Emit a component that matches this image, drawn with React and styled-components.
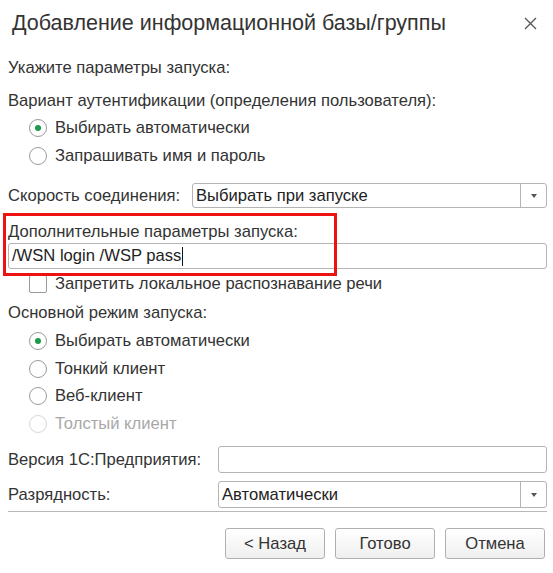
import React from "react";
import styled, { createGlobalStyle } from "styled-components";

const Global = createGlobalStyle`
  html, body { margin: 0; padding: 0; background: #fff; }
  body { font-family: "Liberation Sans", Arial, sans-serif; color: #333; }
`;

const FS = 16.6;

const Dialog = styled.div`
  width: 553px;
  height: 573px;
  background: #fff;
  display: flex;
  flex-direction: column;
  box-sizing: border-box;
  overflow: hidden;
`;

const Header = styled.div`
  height: 46px;
  display: flex;
  align-items: center;
  justify-content: space-between;
  padding: 0 16px 0 12px;
  flex-shrink: 0;
`;

const Title = styled.div`
  font-size: 21.5px;
  color: #333;
  white-space: nowrap;
`;

const Close = styled.div`
  width: 14px;
  height: 14px;
  display: flex;
  align-items: center;
  justify-content: center;
`;

const Body = styled.div`
  display: flex;
  flex-direction: column;
  padding: 0 6px 0 8px;
`;

const Text = styled.div`
  height: ${(p) => p.$h || 20}px;
  margin-top: ${(p) => p.$mt || 0}px;
  display: flex;
  align-items: center;
  font-size: ${FS}px;
  white-space: nowrap;
  color: #333;
`;

const Options = styled.div`
  display: flex;
  flex-direction: column;
  padding-left: 21px;
  margin-top: ${(p) => p.$mt || 0}px;
`;

const Option = styled.label`
  height: ${(p) => p.$h || 28}px;
  display: flex;
  align-items: center;
  gap: 8px;
  font-size: ${FS}px;
  color: ${(p) => (p.$disabled ? "#a8a8a8" : "#333")};
  white-space: nowrap;
`;

const Radio = styled.span`
  width: 18px;
  height: 18px;
  box-sizing: border-box;
  border-radius: 50%;
  border: 1px solid ${(p) => (p.$disabled ? "#d8d8d8" : "#9a9a9a")};
  background: #fff;
  display: flex;
  align-items: center;
  justify-content: center;
  flex-shrink: 0;
  &::after {
    content: "";
    display: ${(p) => (p.$checked ? "block" : "none")};
    width: 6px;
    height: 6px;
    border-radius: 50%;
    background: #1c9a48;
  }
`;

const Check = styled.span`
  width: 18px;
  height: 18px;
  box-sizing: border-box;
  border: 1px solid #9a9a9a;
  border-radius: 2px;
  background: #fff;
  flex-shrink: 0;
`;

const FieldRow = styled.div`
  height: ${(p) => p.$h || 27}px;
  margin-top: ${(p) => p.$mt || 0}px;
  display: grid;
  grid-template-columns: ${(p) => p.$label}px 1fr;
  align-items: center;
  font-size: ${FS}px;
  white-space: nowrap;
`;

const Box = styled.div`
  height: ${(p) => p.$h || 27}px;
  margin-top: ${(p) => p.$mt || 0}px;
  box-sizing: border-box;
  border: 1px solid #b4b4b4;
  border-radius: 3px;
  background: #fff;
  display: flex;
  align-items: stretch;
  font-size: ${FS}px;
  color: #222;
`;

const BoxText = styled.div`
  flex: 1;
  display: flex;
  align-items: center;
  padding-left: 3px;
  white-space: nowrap;
`;

const Caret = styled.span`
  display: inline-block;
  width: 1px;
  height: 19px;
  background: #111;
  margin-left: 1px;
`;

const DropBtn = styled.div`
  width: 25px;
  border-left: 1px solid #b4b4b4;
  display: flex;
  align-items: center;
  justify-content: center;
  &::after {
    content: "";
    width: 0;
    height: 0;
    border-left: 3.5px solid transparent;
    border-right: 3.5px solid transparent;
    border-top: 4px solid #555;
  }
`;

const Section = styled.div`
  position: relative;
  display: flex;
  flex-direction: column;
  margin-top: ${(p) => p.$mt || 0}px;
`;

const Highlight = styled.div`
  position: absolute;
  left: -5px;
  top: -9px;
  width: 334px;
  height: 63px;
  box-sizing: border-box;
  border: 3px solid #ee1111;
  pointer-events: none;
`;

const Separator = styled.div`
  height: 1px;
  background: #b8b8b8;
  margin-top: 3px;
`;

const Buttons = styled.div`
  display: flex;
  justify-content: flex-end;
  gap: 10px;
  margin-top: 16px;
  padding-right: 2px;
`;

const Button = styled.button`
  width: 100px;
  height: 31px;
  box-sizing: border-box;
  border: 1px solid #b0b0b0;
  border-radius: 3px;
  background: linear-gradient(#ffffff, #efefef);
  font-family: "Liberation Sans", Arial, sans-serif;
  font-size: ${FS}px;
  color: #333;
  padding: 0;
`;

const CloseIcon = () => (
  <svg width="13" height="13" viewBox="0 0 13 13">
    <path d="M1 1 L12 12 M12 1 L1 12" stroke="#555" strokeWidth="1.3" />
  </svg>
);

export default function App() {
  return (
    <>
      <Global />
      <Dialog>
        <Header>
          <Title>Добавление информационной базы/группы</Title>
          <Close>
            <CloseIcon />
          </Close>
        </Header>
        <Body>
          <Text $mt={12}>Укажите параметры запуска:</Text>
          <Text $mt={13}>Вариант аутентификации (определения пользователя):</Text>
          <Options $mt={3}>
            <Option>
              <Radio $checked />
              Выбирать автоматически
            </Option>
            <Option>
              <Radio />
              Запрашивать имя и пароль
            </Option>
          </Options>
          <FieldRow $label={184} $h={25} $mt={13}>
            <span>Скорость соединения:</span>
            <Box $h={25}>
              <BoxText>Выбирать при запуске</BoxText>
              <DropBtn />
            </Box>
          </FieldRow>
          <Section $mt={14}>
            <Text>Дополнительные параметры запуска:</Text>
            <Box $h={26} $mt={1}>
              <BoxText>
                /WSN login /WSP pass
                <Caret />
              </BoxText>
            </Box>
            <Highlight />
          </Section>
          <Options $mt={3}>
            <Option $h={24}>
              <Check />
              Запретить локальное распознавание речи
            </Option>
          </Options>
          <Text $mt={7}>Основной режим запуска:</Text>
          <Options $mt={4}>
            <Option $h={28}>
              <Radio $checked />
              Выбирать автоматически
            </Option>
            <Option $h={27}>
              <Radio />
              Тонкий клиент
            </Option>
            <Option $h={28}>
              <Radio />
              Веб-клиент
            </Option>
            <Option $h={27} $disabled>
              <Radio $disabled />
              Толстый клиент
            </Option>
          </Options>
          <FieldRow $label={210} $mt={9}>
            <span>Версия 1С:Предприятия:</span>
            <Box>
              <BoxText />
            </Box>
          </FieldRow>
          <FieldRow $label={210} $mt={8}>
            <span>Разрядность:</span>
            <Box>
              <BoxText>Автоматически</BoxText>
              <DropBtn />
            </Box>
          </FieldRow>
          <Separator />
          <Buttons>
            <Button>&lt; Назад</Button>
            <Button>Готово</Button>
            <Button>Отмена</Button>
          </Buttons>
        </Body>
      </Dialog>
    </>
  );
}
